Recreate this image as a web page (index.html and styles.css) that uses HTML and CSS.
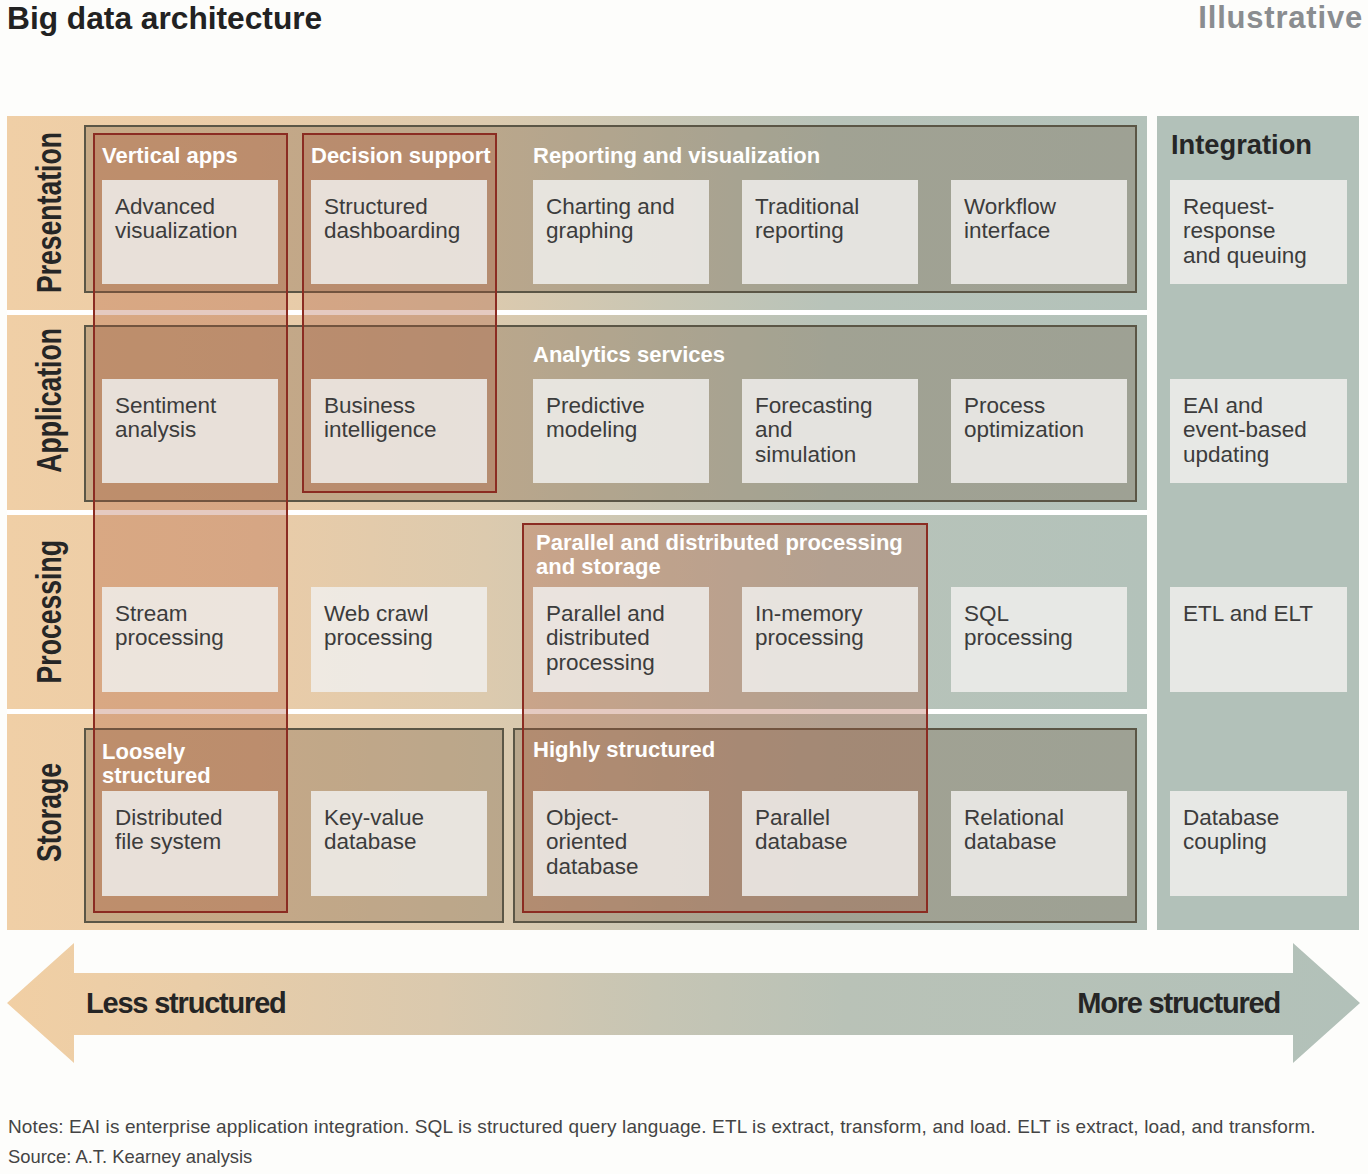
FILE: index.html
```html
<!DOCTYPE html>
<html lang="en">
<head>
<meta charset="utf-8">
<title>Big data architecture</title>
<link rel="stylesheet" href="styles.css">
</head>
<body>
<div class="page">
  <header class="head">
    <h1 class="title">Big data architecture</h1>
    <span class="tag">Illustrative</span>
  </header>

  <div class="diagram">
    <div class="band">
      <section class="row">
        <div class="row-label"><span>Presentation</span></div>
        <div class="row-body">
          <div class="group group-pres">
            <div class="heads">
              <span class="slot">Vertical apps</span>
              <span class="slot">Decision support</span>
              <span class="slot slot-wide c3">Reporting and visualization</span>
            </div>
            <div class="cells-row">
              <div class="cell">Advanced<br>visualization</div>
              <div class="cell">Structured<br>dashboarding</div>
              <div class="cell c3">Charting and<br>graphing</div>
              <div class="cell">Traditional<br>reporting</div>
              <div class="cell">Workflow<br>interface</div>
            </div>
          </div>
        </div>
      </section>

      <section class="row row-app">
        <div class="row-label row-label-app"><span>Application</span></div>
        <div class="row-body">
          <div class="group group-app">
            <div class="heads">
              <span class="slot"></span>
              <span class="slot"></span>
              <span class="slot slot-wide c3">Analytics services</span>
            </div>
            <div class="cells-row">
              <div class="cell">Sentiment<br>analysis</div>
              <div class="cell">Business<br>intelligence</div>
              <div class="cell c3">Predictive<br>modeling</div>
              <div class="cell">Forecasting<br>and<br>simulation</div>
              <div class="cell">Process<br>optimization</div>
            </div>
          </div>
        </div>
      </section>

      <section class="row">
        <div class="row-label"><span>Processing</span></div>
        <div class="row-body row-body-proc">
          <div class="heads heads-proc">
            <span class="slot"></span>
            <span class="slot"></span>
            <span class="slot slot-proc c3">Parallel and distributed processing<br>and storage</span>
          </div>
          <div class="cells-row cells-proc">
            <div class="cell">Stream<br>processing</div>
            <div class="cell">Web crawl<br>processing</div>
            <div class="cell c3">Parallel and<br>distributed<br>processing</div>
            <div class="cell">In-memory<br>processing</div>
            <div class="cell">SQL<br>processing</div>
          </div>
        </div>
      </section>

      <section class="row row-stor">
        <div class="row-label row-label-stor"><span>Storage</span></div>
        <div class="row-body row-body-stor">
          <div class="group group-loose">
            <div class="heads heads-loose">
              <span class="slot">Loosely<br>structured</span>
            </div>
            <div class="cells-row cells-bottom">
              <div class="cell">Distributed<br>file system</div>
              <div class="cell">Key-value<br>database</div>
            </div>
          </div>
          <div class="group group-high">
            <div class="heads">
              <span class="slot slot-wide">Highly structured</span>
            </div>
            <div class="cells-row cells-bottom">
              <div class="cell">Object-<br>oriented<br>database</div>
              <div class="cell">Parallel<br>database</div>
              <div class="cell">Relational<br>database</div>
            </div>
          </div>
        </div>
      </section>

      <div class="hl hl-vertical"></div>
      <div class="hl hl-decision"></div>
      <div class="hl hl-parallel"></div>
    </div>

    <aside class="integration">
      <div class="int-sec int-sec-1">
        <h2 class="int-title">Integration</h2>
        <div class="cell int-cell">Request-<br>response<br>and queuing</div>
      </div>
      <div class="int-sec int-sec-2">
        <div class="cell int-cell">EAI and<br>event-based<br>updating</div>
      </div>
      <div class="int-sec int-sec-3">
        <div class="cell int-cell">ETL and ELT</div>
      </div>
      <div class="int-sec int-sec-4">
        <div class="cell int-cell">Database<br>coupling</div>
      </div>
    </aside>
  </div>

  <div class="arrow">
    <span>Less structured</span>
    <span>More structured</span>
  </div>

  <footer class="foot">
    <p class="notes">Notes: EAI is enterprise application integration. SQL is structured query language. ETL is extract, transform, and load. ELT is extract, load, and transform.</p>
    <p class="source">Source: A.T. Kearney analysis</p>
  </footer>
</div>
</body>
</html>
```

FILE: styles.css
```css
* {
  box-sizing: border-box;
  margin: 0;
  padding: 0;
}

body {
  width: 1368px;
  background: #fdfdfb;
  font-family: "Liberation Sans", Arial, sans-serif;
  color: #3c3c3c;
}

.head {
  display: flex;
  justify-content: space-between;
  align-items: flex-start;
  height: 116px;
  padding: 0 5px 0 7px;
}

.title {
  font-size: 31.7px;
  line-height: 36px;
  font-weight: 700;
  color: #222;
}

.tag {
  font-size: 31px;
  line-height: 36px;
  font-weight: 700;
  color: #8a8d90;
  letter-spacing: 0.8px;
}

.diagram {
  display: flex;
  gap: 10px;
  padding-left: 7px;
  height: 814px;
}

.band {
  position: relative;
  width: 1140px;
  flex: none;
  display: flex;
  flex-direction: column;
  gap: 5px;
  background: #fff;
}

.row {
  display: flex;
  height: 194px;
  flex: none;
  background: linear-gradient(90deg, #f0cfa6 0%, #eacca8 22%, #dccaae 42%, #c8c6b4 58%, #b8c3b9 72%, #b3c2ba 100%);
}

.row-app { height: 195px; }
.row-stor { height: 216px; }

.row-label {
  width: 77px;
  flex: none;
  display: flex;
  align-items: center;
  justify-content: center;
  padding-left: 8px;
}

.row-label span {
  writing-mode: vertical-rl;
  transform: rotate(180deg) scaleX(1.3);
  font-weight: 700;
  font-size: 26.6px;
  line-height: 1;
  color: #262626;
}

.row-label-app { padding-bottom: 24px; }
.row-label-stor { padding-bottom: 18px; }

.row-body {
  flex: 1;
  display: flex;
  flex-direction: column;
  padding-right: 10px;
}

.group {
  border: 2px solid #5b5646;
  background: rgba(109, 87, 59, 0.3);
  display: flex;
  flex-direction: column;
}

.group-pres {
  margin-top: 9px;
  height: 168px;
  padding: 16px 7px 0 16px;
}

.group-app {
  margin-top: 10px;
  height: 177px;
  padding: 15px 7px 0 16px;
}

.heads {
  position: relative;
  z-index: 2;
  display: flex;
  gap: 33px;
  font-weight: 700;
  font-size: 22px;
  line-height: 26px;
  color: #fff;
  white-space: nowrap;
}

.slot {
  width: 176px;
  flex: none;
}

.slot-wide { width: 400px; }

.c3 { margin-left: 13px; }

.cells-row {
  display: flex;
  gap: 33px;
  margin-top: 11px;
}

.cell {
  position: relative;
  z-index: 2;
  width: 176px;
  height: 104px;
  flex: none;
  background: rgba(240, 239, 236, 0.85);
  padding: 15px 6px 0 13px;
  font-size: 22.5px;
  line-height: 24.3px;
  color: #3c3c3c;
  white-space: nowrap;
}

/* Processing row */
.row-body-proc {
  padding: 16px 10px 0 18px;
}

.heads-proc {
  line-height: 24px;
  height: 48px;
}

.slot-proc {
  width: 400px;
  padding-left: 3px;
}

.cells-proc {
  margin-top: 8px;
}

.cells-proc .cell { height: 105px; }

/* Storage row */
.row-body-stor {
  flex-direction: row;
  gap: 9px;
  padding-top: 14px;
}

.group-loose {
  width: 420px;
  height: 195px;
  flex: none;
  padding: 10px 15px 25px 16px;
}

.group-high {
  width: 624px;
  height: 195px;
  flex: none;
  padding: 7px 8px 25px 18px;
}

.heads-loose { line-height: 24px; }

.cells-bottom { margin-top: auto; }
.cells-bottom .cell { height: 105px; }

/* Highlight overlays spanning rows */
.hl {
  position: absolute;
  z-index: 1;
  border: 2px solid #8b2c22;
  background: rgba(170, 80, 50, 0.3);
  pointer-events: none;
}

.hl-vertical { left: 86px; top: 17px; width: 195px; height: 780px; }
.hl-decision { left: 295px; top: 17px; width: 195px; height: 360px; }
.hl-parallel { left: 515px; top: 407px; width: 406px; height: 390px; }

/* Integration column */
.integration {
  width: 202px;
  flex: none;
  background: #b2c1b9;
  display: grid;
  grid-template-rows: 194px 195px 194px 216px;
  row-gap: 5px;
  padding-left: 13px;
}

.int-sec {
  display: flex;
  flex-direction: column;
}

.int-sec-1 { padding-top: 13px; }
.int-sec-2 { padding-top: 64px; }
.int-sec-3 { padding-top: 72px; }
.int-sec-4 { padding-top: 77px; }

.int-title {
  font-size: 27.3px;
  line-height: 32px;
  font-weight: 700;
  color: #262626;
  padding-left: 1px;
}

.int-cell {
  width: 177px;
}

.int-sec-1 .int-cell { margin-top: 19px; }
.int-sec-3 .int-cell,
.int-sec-4 .int-cell { height: 105px; }

/* Arrow */
.arrow {
  margin: 13px 0 0 7px;
  width: 1353px;
  height: 120px;
  clip-path: polygon(0 60px, 67px 0, 67px 30px, 1286px 30px, 1286px 0, 1353px 60px, 1286px 120px, 1286px 92px, 67px 92px, 67px 120px);
  background: linear-gradient(90deg, #f1cfa4 0%, #e9cda8 14%, #dac9ae 32%, #c6c5b4 48%, #b9c2b7 62%, #b2c1b9 100%);
  display: flex;
  justify-content: space-between;
  align-items: center;
  padding: 0 80px 0 79px;
  font-weight: 700;
  font-size: 29px;
  letter-spacing: -1.2px;
  color: #252525;
}

/* Footnotes */
.foot {
  margin: 49px 0 0 8px;
  line-height: 30px;
  color: #444;
}

.notes {
  font-size: 19px;
  letter-spacing: 0.13px;
}

.source {
  font-size: 18.4px;
}
```
